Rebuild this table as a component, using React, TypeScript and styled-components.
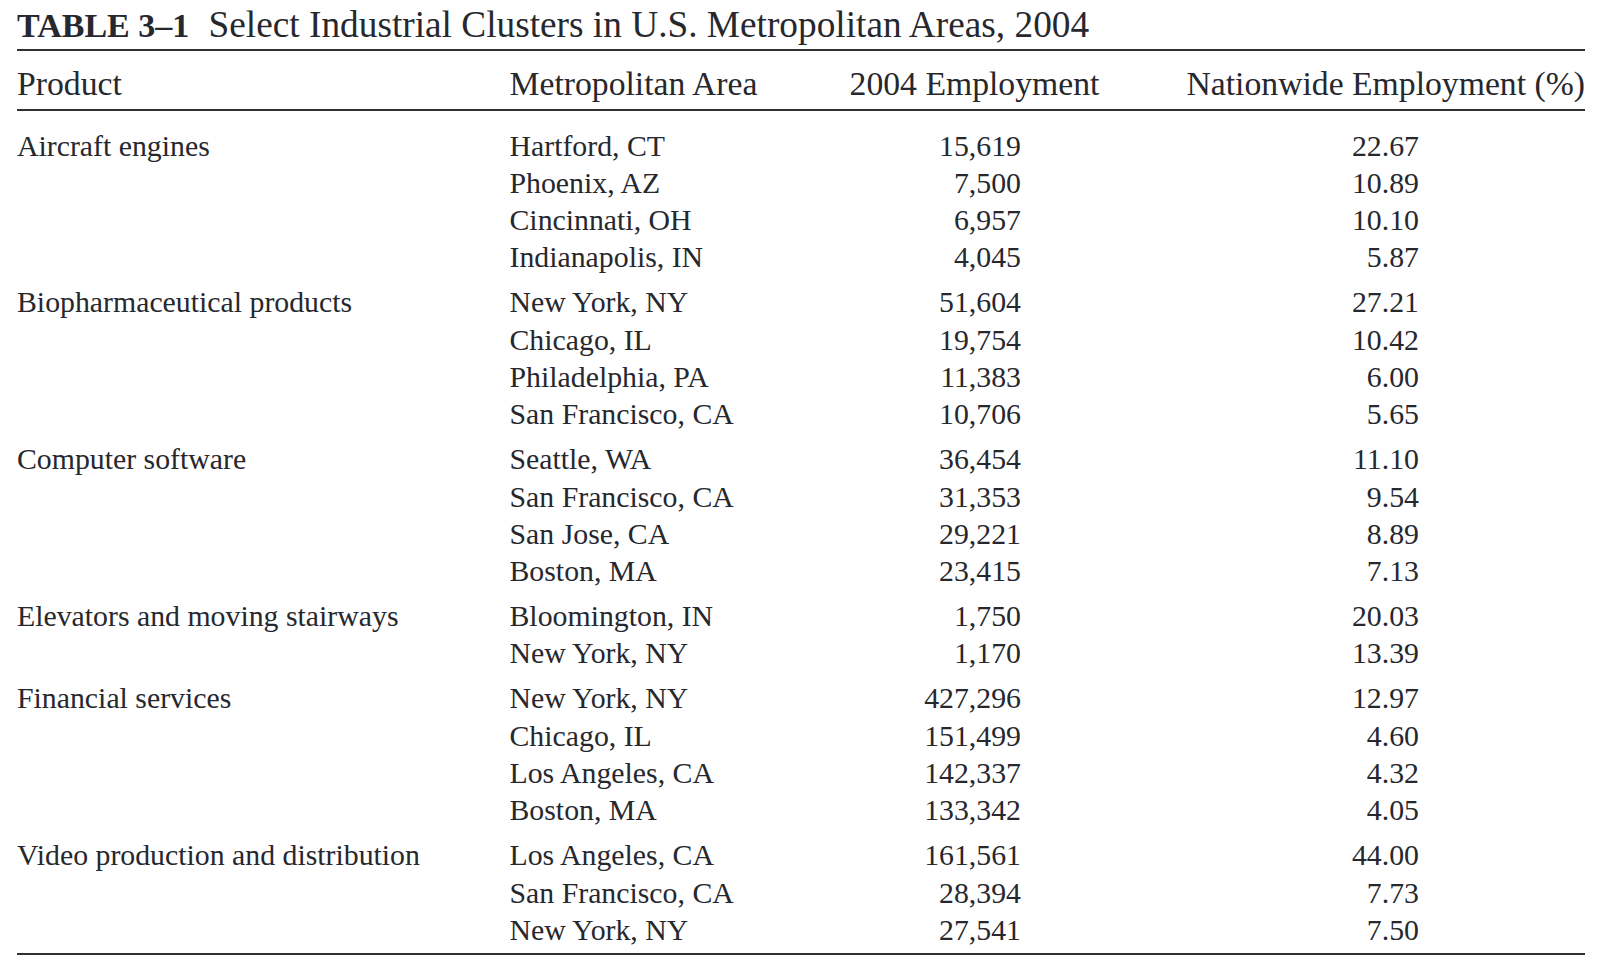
import React from 'react';
import styled, { createGlobalStyle } from 'styled-components';

const GlobalStyle = createGlobalStyle`
html, body {
	margin: 0;
	padding: 0;
	background: #fff;
}
body {
	font-family: "Liberation Serif", "Times New Roman", serif;
	color: #26282e;
}
`;

type Row = { metro: string, employment: string, share: string };
type Cluster = { product: string, rows: Row[] };

const CLUSTERS: Cluster[] = [
	{
		product: "Aircraft engines", rows: [
			{ metro: "Hartford, CT", employment: "15,619", share: "22.67" },
			{ metro: "Phoenix, AZ", employment: "7,500", share: "10.89" },
			{ metro: "Cincinnati, OH", employment: "6,957", share: "10.10" },
			{ metro: "Indianapolis, IN", employment: "4,045", share: "5.87" },
		]
	},
	{
		product: "Biopharmaceutical products", rows: [
			{ metro: "New York, NY", employment: "51,604", share: "27.21" },
			{ metro: "Chicago, IL", employment: "19,754", share: "10.42" },
			{ metro: "Philadelphia, PA", employment: "11,383", share: "6.00" },
			{ metro: "San Francisco, CA", employment: "10,706", share: "5.65" },
		]
	},
	{
		product: "Computer software", rows: [
			{ metro: "Seattle, WA", employment: "36,454", share: "11.10" },
			{ metro: "San Francisco, CA", employment: "31,353", share: "9.54" },
			{ metro: "San Jose, CA", employment: "29,221", share: "8.89" },
			{ metro: "Boston, MA", employment: "23,415", share: "7.13" },
		]
	},
	{
		product: "Elevators and moving stairways", rows: [
			{ metro: "Bloomington, IN", employment: "1,750", share: "20.03" },
			{ metro: "New York, NY", employment: "1,170", share: "13.39" },
		]
	},
	{
		product: "Financial services", rows: [
			{ metro: "New York, NY", employment: "427,296", share: "12.97" },
			{ metro: "Chicago, IL", employment: "151,499", share: "4.60" },
			{ metro: "Los Angeles, CA", employment: "142,337", share: "4.32" },
			{ metro: "Boston, MA", employment: "133,342", share: "4.05" },
		]
	},
	{
		product: "Video production and distribution", rows: [
			{ metro: "Los Angeles, CA", employment: "161,561", share: "44.00" },
			{ metro: "San Francisco, CA", employment: "28,394", share: "7.73" },
			{ metro: "New York, NY", employment: "27,541", share: "7.50" },
		]
	},
];

const COLUMNS = "492.5px 320.5px 289px 466px";

const Page = styled.div`
width: 1568px;
padding: 4.5px 0 0 17px;
`;

const Caption = styled.div`
font-size: 37.3px;
line-height: 40px;
white-space: nowrap;
`;

const Label = styled.span`
font-size: 34px;
font-weight: bold;
margin-right: 10px;
`;

const Rule = styled.div<{ $gap: number }>`
height: 2px;
background: #2e3035;
margin-top: ${p => p.$gap}px;
`;

const HeaderRow = styled.div`
display: grid;
grid-template-columns: ${COLUMNS};
font-size: 33.7px;
line-height: 40px;
padding: 13px 0 5px;
white-space: nowrap;
`;

const HeadCell = styled.div<{ $align: "start" | "center" | "end" }>`
justify-self: ${p => p.$align};
`;

const Body = styled.div`
display: flex;
flex-direction: column;
gap: 7.7px;
padding-top: 15.5px;
`;

const Group = styled.div`
display: grid;
grid-template-columns: ${COLUMNS};
grid-auto-rows: 37.3px;
font-size: 29.8px;
line-height: 37.3px;
white-space: nowrap;
`;

const Cell = styled.div<{ $pad?: number }>`
text-align: ${p => p.$pad === undefined ? "left" : "right"};
padding-right: ${p => p.$pad ?? 0}px;
`;

export default function App() {
	return <>
		<GlobalStyle />
		<Page>
			<Caption>
				<Label>TABLE 3–1</Label> Select Industrial Clusters in U.S. Metropolitan Areas, 2004
			</Caption>
			<Rule $gap={3.5} />
			<HeaderRow>
				<HeadCell $align="start">Product</HeadCell>
				<HeadCell $align="start">Metropolitan Area</HeadCell>
				<HeadCell $align="center">2004 Employment</HeadCell>
				<HeadCell $align="end">Nationwide Employment (%)</HeadCell>
			</HeaderRow>
			<Rule $gap={0} />
			<Body>
				{CLUSTERS.map(c =>
					<Group key={c.product}>
						{c.rows.map((r, i) =>
							<React.Fragment key={i}>
								<Cell>{i === 0 ? c.product : ""}</Cell>
								<Cell>{r.metro}</Cell>
								<Cell $pad={98}>{r.employment}</Cell>
								<Cell $pad={166}>{r.share}</Cell>
							</React.Fragment>
						)}
					</Group>
				)}
			</Body>
			<Rule $gap={5.3} />
		</Page>
	</>;
}
